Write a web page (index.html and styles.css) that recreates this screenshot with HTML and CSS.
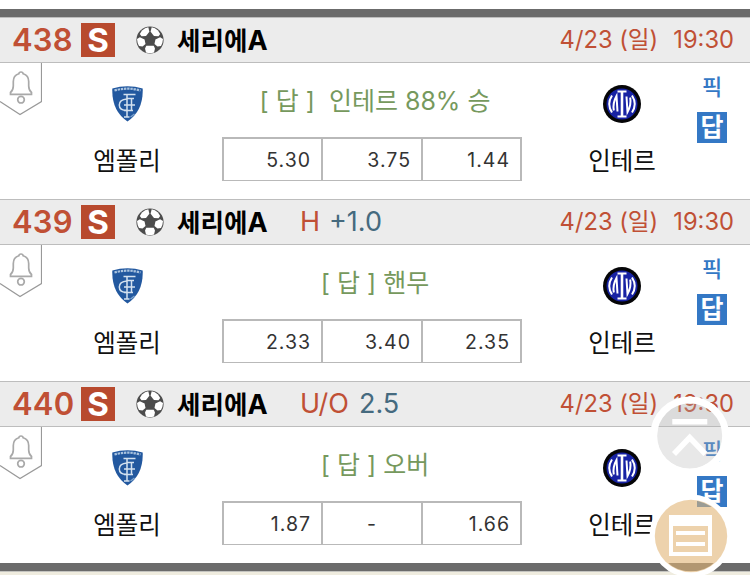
FILE: index.html
```html
<!DOCTYPE html>
<html lang="ko">
<head>
<meta charset="utf-8">
<title>세리에A</title>
<link rel="stylesheet" href="styles.css">
</head>
<body>
<svg class="defs" width="0" height="0">
  <symbol id="ball" viewBox="0 0 28 28">
    <circle cx="14" cy="14" r="13.6" fill="#4c4c4c"/>
    <g fill="#fff">
      <path d="M6 4.400Q9 1.700 12.300 1.200L13.400 5.800 10 9.900 5.500 10.200 3.800 8Z"/>
      <path d="M22 4.400Q19 1.700 15.700 1.200L14.600 5.800 18 9.900 22.500 10.200 24.200 8Z"/>
      <path d="M1 13L3.900 11.300 8.600 13.600 9.500 18 6.500 20.500 3 20Q1.200 17 1 13Z"/>
      <path d="M27 13L24.100 11.300 19.400 13.600 18.500 18 21.500 20.500 25 20Q26.800 17 27 13Z"/>
      <path d="M10.300 19.800H17.700L19 22.500 18 26.500Q14 27.500 10 26.500L9 22.500Z"/>
    </g>
  </symbol>
  <symbol id="bell" viewBox="0 0 42 53">
    <path d="M41.500 0V38.500L20 51.500 0 38.500" fill="#fff" stroke="#999" stroke-width="1.200"/>
    <g fill="none" stroke="#a9a9a9" stroke-width="1.700">
      <path d="M10.500 31.300V29.500Q13.300 27 13.300 23V18.500Q13.300 12.500 18.800 10.800 19 9 21 9T23.200 10.800Q28.700 12.500 28.700 18.500V23Q28.700 27 31.500 29.500V31.300Z"/>
      <circle cx="21" cy="36.700" r="3.300"/>
    </g>
  </symbol>
  <symbol id="empoli" viewBox="0 0 31 36">
    <path d="M.3 2.500Q15.500-2 30.700 2.500 31.500 25 15.500 35.500-.5 25 .3 2.500Z" fill="#22589f"/>
    <path d="M2.500 4.500Q15.500.800 28.500 4.500" fill="none" stroke="#a9c3df" stroke-width="2.200" stroke-dasharray="2.400 .8"/>
    <g fill="none" stroke="#d3e1f0" stroke-width="1.500">
      <path d="M11.500 8.500H23.500M14.500 12.500H22M15 8.500V31M12 19H23M12 24.500H21M19.500 12.500V24.500M12 31H17.500"/>
      <path d="M15 13Q7.300 13.500 7.300 19T15 24.500"/>
      <path d="M18.500 31L22.500 28" stroke="#7da3cd"/>
    </g>
  </symbol>
  <symbol id="inter" viewBox="0 0 38 38">
    <circle cx="19" cy="19" r="19" fill="#050507"/>
    <circle cx="19" cy="19" r="15.500" fill="#1722a3"/>
    <g fill="none" stroke="#fff" stroke-width="2">
      <path d="M14.500 6.500H23.500M14.500 31.500H23.500"/>
      <path d="M19 7V31" stroke-width="2.600"/>
      <path d="M9 10.500Q3.500 19 9 27.500M29 10.500Q34.500 19 29 27.500"/>
      <path d="M10.800 25.500Q9.500 18 13.500 11L14.500 26.500M27.200 12.500Q28.500 20 24.500 27L23.500 11.500"/>
    </g>
  </symbol>
</svg>

<main class="board">
  <section class="match">
    <header class="head">
      <span class="num">438</span><span class="badge">S</span>
      <svg class="ball"><use href="#ball"/></svg>
      <b class="league">세리에<i>A</i></b>
      <span class="market"></span>
      <time class="date"><span class="day">4/23 (일)</span><span>19:30</span></time>
    </header>
    <div class="body">
      <svg class="bell"><use href="#bell"/></svg>
      <div class="team home"><svg class="crest-e"><use href="#empoli"/></svg><span>엠폴리</span></div>
      <div class="center">
        <p class="answer">[ 답 ]&nbsp; 인테르 88% 승</p>
        <div class="odds"><span>5.30</span><span>3.75</span><span>1.44</span></div>
      </div>
      <div class="team away"><svg class="crest-i"><use href="#inter"/></svg><span>인테르</span></div>
      <div class="picks"><span class="pick">픽</span><span class="ans">답</span></div>
    </div>
  </section>

  <section class="match">
    <header class="head">
      <span class="num">439</span><span class="badge">S</span>
      <svg class="ball"><use href="#ball"/></svg>
      <b class="league">세리에<i>A</i></b>
      <span class="market"><em class="h">H</em><span class="line">+1.0</span></span>
      <time class="date"><span class="day">4/23 (일)</span><span>19:30</span></time>
    </header>
    <div class="body">
      <svg class="bell"><use href="#bell"/></svg>
      <div class="team home"><svg class="crest-e"><use href="#empoli"/></svg><span>엠폴리</span></div>
      <div class="center">
        <p class="answer">[ 답 ] 핸무</p>
        <div class="odds"><span>2.33</span><span>3.40</span><span>2.35</span></div>
      </div>
      <div class="team away"><svg class="crest-i"><use href="#inter"/></svg><span>인테르</span></div>
      <div class="picks"><span class="pick">픽</span><span class="ans">답</span></div>
    </div>
  </section>

  <section class="match">
    <header class="head">
      <span class="num">440</span><span class="badge">S</span>
      <svg class="ball"><use href="#ball"/></svg>
      <b class="league">세리에<i>A</i></b>
      <span class="market"><em class="uo">U/O</em><span class="line">2.5</span></span>
      <time class="date"><span class="day">4/23 (일)</span><span>19:30</span></time>
    </header>
    <div class="body">
      <svg class="bell"><use href="#bell"/></svg>
      <div class="team home"><svg class="crest-e"><use href="#empoli"/></svg><span>엠폴리</span></div>
      <div class="center">
        <p class="answer">[ 답 ] 오버</p>
        <div class="odds"><span>1.87</span><span class="none">-</span><span>1.66</span></div>
      </div>
      <div class="team away"><svg class="crest-i"><use href="#inter"/></svg><span>인테르</span></div>
      <div class="picks"><span class="pick">픽</span><span class="ans">답</span></div>
    </div>
  </section>
</main>

<svg class="float to-top" viewBox="0 0 80 80">
  <circle cx="39.700" cy="40" r="33" fill="#b2b2b2" fill-opacity=".3"/>
  <circle cx="39.700" cy="40" r="36" fill="none" stroke="#fff" stroke-width="7"/>
  <path d="M22.300 25.800H57.300M24 58L39.700 41.500 55.400 58" fill="none" stroke="#fff" stroke-width="5.600"/>
</svg>
<svg class="float menu" viewBox="0 0 80 80">
  <circle cx="40" cy="40" r="38.500" fill="none" stroke="#fff" stroke-width="6"/>
  <circle cx="40" cy="40" r="36.200" fill="#e1b475" fill-opacity=".6"/>
  <path fill="#fff" fill-rule="evenodd" d="M18 19H61V60H18ZM22 30V56H57V30Z"/>
  <path d="M25 37H54M25 48H54" fill="none" stroke="#fff" stroke-width="4"/>
</svg>
</body>
</html>
```
FILE: styles.css
```css
* { box-sizing: border-box; }
body {
  margin: 0;
  height: 575px;
  overflow: hidden;
  background: #efecdf;
  font-family: Inter, "Noto Sans CJK KR", sans-serif;
  color: #111;
}
.defs { position: absolute; }
.board {
  height: 562px;
  margin-top: 9px;
  border-top: 8px solid #6b6b6b;
  border-bottom: 8px solid #6b6b6b;
  background: #fff;
  box-shadow: 0 -9px #fff, 0 1px #c4c4c0;
}
.match { height: 182px; }
.head {
  display: grid;
  grid-template-columns: 69px 34px 21px 28px 12px 124px 150px 1fr;
  grid-template-rows: 44px;
  height: 46px;
  padding: 0 16px 0 12px;
  align-items: center;
  background: #ececec;
  border: solid #bdbdbd;
  border-width: 1px 0;
  white-space: nowrap;
}
.num { color: #c05035; font-size: 31px; font-weight: 600; line-height: 44px; letter-spacing: .2px; }
.badge {
  height: 34px;
  background: #b84a2e;
  color: #fff;
  font-size: 33px;
  font-weight: 700;
  line-height: 34px;
  text-align: center;
}
.ball { grid-column: 4; width: 28px; height: 28px; }
.league { grid-column: 6; padding-left: 1px; color: #000; font-size: 25.500px; font-weight: 700; line-height: 43px; }
.league i { font-style: normal; font-size: 27px; }
.market { display: flex; color: #456a7f; font-size: 27px; line-height: 46px; }
.market em { color: #c05035; font-style: normal; }
.h { width: 29px; }
.uo { width: 59px; }
.date {
  display: flex;
  justify-content: flex-end;
  gap: 15px;
  color: #c05035;
  font-size: 23.700px;
  line-height: 46px;
}
.body { display: grid; grid-template-columns: 42px 170px 10px 300px 25px 150px 30px; height: 136px; }
.bell { width: 42px; height: 53px; }
.team { display: flex; flex-direction: column; align-items: center; font-size: 24.500px; line-height: 36px; }
.team svg { flex: none; }
.team span { margin-top: auto; margin-bottom: 20px; }
.crest-e { width: 31px; height: 36px; margin-top: 23px; }
.crest-i { width: 38px; height: 38px; margin-top: 22px; }
.center { grid-column: 4; }
.answer {
  height: 74px;
  margin: 0;
  padding: 20px 0 0 6px;
  color: #76995d;
  font-size: 25px;
  line-height: 36px;
  text-align: center;
  white-space: nowrap;
}
.odds {
  display: grid;
  grid-template-columns: 99px 100px 99px;
  width: 300px;
  height: 44px;
  border: solid #b9b9b9;
  border-width: 2px 0 1px 2px;
}
.odds span {
  padding-right: 10px;
  border-right: 2px solid #b9b9b9;
  color: #333;
  font-size: 19.500px;
  letter-spacing: 1px;
  line-height: 42px;
  text-align: right;
}
.odds .none { padding: 0; text-align: center; }
.away { grid-column: 6; }
.picks { display: flex; flex-direction: column; align-items: center; color: #3478c5; }
.pick { margin-top: 9px; height: 30px; font-size: 22px; font-weight: 500; line-height: 30px; }
.ans {
  width: 30px;
  height: 31px;
  margin-top: 10px;
  background: #3478c5;
  color: #fff;
  font-size: 25px;
  font-weight: 700;
  line-height: 30px;
  text-align: center;
}
.float { position: absolute; width: 80px; height: 80px; overflow: visible; }
.to-top { left: 650px; top: 396px; }
.menu { left: 651px; top: 496px; }
```
